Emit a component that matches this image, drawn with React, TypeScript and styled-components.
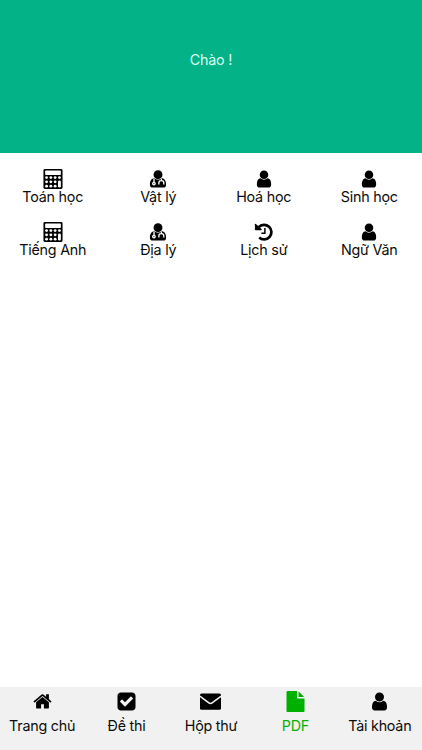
import React from "react";
import styled, { createGlobalStyle } from "styled-components";

const GlobalStyle = createGlobalStyle`
  * { box-sizing: border-box; }
  body { margin: 0; background: #fff; }
`;

const Screen = styled.div`
  display: flex;
  flex-direction: column;
  width: 100%;
  height: 100vh;
  overflow: hidden;
  background: #fff;
  color: #0c0c0c;
  font-family: Inter, "Noto Sans", sans-serif;
  font-size: 14.3px;
  letter-spacing: -0.22px;
  line-height: 17px;
`;

const Header = styled.header`
  height: 153px;
  flex: none;
  padding-top: 51px;
  text-align: center;
  color: #d9fff4;
  background: #03b286;
`;

const SubjectGrid = styled.main`
  flex: 1;
  display: grid;
  grid-template-columns: repeat(4, 1fr);
  grid-auto-rows: 53px;
  padding-top: 15.5px;
`;

const Subject = styled.button`
  display: flex;
  flex-direction: column;
  align-items: center;
  padding: 0;
  border: 0;
  background: none;
  color: inherit;
  font: inherit;
  letter-spacing: inherit;
  white-space: nowrap;
`;

const Label = styled.span`
  display: block;
`;

const Glyph = styled.svg<{ $size: number }>`
  display: block;
  width: ${({ $size }) => $size}px;
  height: ${({ $size }) => $size}px;
  margin-bottom: ${({ $size }) => 19.5 - $size}px;
  fill: currentColor;
  color: #000;
`;

const TabBar = styled.nav`
  flex: none;
  display: grid;
  grid-template-columns: repeat(5, 1fr);
  height: 63.4px;
  background: #f1f1f1;
`;

const Tab = styled(Subject)<{ $active?: boolean }>`
  padding-top: 4.8px;
  color: ${({ $active }) => ($active ? "#08b008" : "#0c0c0c")};

  ${Glyph} {
    margin-bottom: 4.8px;
    color: ${({ $active }) => ($active ? "#00b000" : "#000")};
  }
`;

const paths = {
  user: "M1536 1399q0 109-62.5 187t-150.5 78h-854q-88 0-150.5-78t-62.5-187q0-85 8.5-160.5t31.5-152 58.5-131 94-89 134.5-34.5q131 128 313 128t313-128q76 0 134.5 34.5t94 89 58.5 131 31.5 152 8.5 160.5zm-256-887q0 159-112.5 271.5t-271.5 112.5-271.5-112.5-112.5-271.5 112.5-271.5 271.5-112.5 271.5 112.5 112.5 271.5z",
  check: "M813 1299l614-614q19-19 19-45t-19-45l-102-102q-19-19-45-19t-45 19l-467 467-211-211q-19-19-45-19t-45 19l-102 102q-19 19-19 45t19 45l358 358q19 19 45 19t45-19zm851-883v960q0 119-84.5 203.5t-203.5 84.5h-960q-119 0-203.5-84.5t-84.5-203.5v-960q0-119 84.5-203.5t203.5-84.5h960q119 0 203.5 84.5t84.5 203.5z",
  file: "M1152 512v-472q22 14 36 28l408 408q14 14 28 36h-472zm-128 32q0 40 28 68t68 28h544v1056q0 40-28 68t-68 28h-1344q-40 0-68-28t-28-68v-1600q0-40 28-68t68-28h800v544z",
};

const homePath =
  "M1472 992v480q0 26-19 45t-45 19h-384v-384h-256v384h-384q-26 0-45-19t-19-45v-480q0-1 .5-3t.5-3l575-474 575 474q1 2 1 6zm223-69l-62 74q-8 9-21 11h-3q-13 0-21-7l-692-577-692 577q-12 8-24 7-13-2-21-11l-62-74q-8-10-7-23.5t11-21.5l719-599q32-26 76-26t76 26l244 204v-195q0-14 9-23t23-9h192q14 0 23 9t9 23v408l219 182q10 8 11 21.5t-7 23.5z";

type IconName = keyof typeof paths | "home" | "envelope" | "history" | "calculator" | "doctor";

function Calculator() {
  return (
    <>
      <rect x="40" width="1712" height="1792" rx="128" />
      <g fill="#fff">
        <rect x="192" y="135" width="1408" height="400" rx="64" />
        {[768, 1152, 1536].map((y) =>
          [320, 704, 1088].map((x) => <circle key={`${x}-${y}`} cx={x} cy={y} r="128" />)
        )}
        <circle cx="1472" cy="768" r="128" />
        <rect x="1344" y="1024" width="256" height="640" rx="128" />
      </g>
    </>
  );
}

function Doctor() {
  return (
    <>
      <circle cx="896" cy="512" r="400" />
      <path d="M583 832q131 128 313 128t313-128c270 0 411 230 411 570q0 262-267 262H439q-267 0-267-262c0-340 141-570 411-570z" />
      <g fill="none" stroke="#fff" strokeWidth="120">
        <path d="M540 850v350M1200 850v190M975 1390v-150q0-200 190-200h60q190 0 190 200v150" />
        <circle cx="530" cy="1310" r="110" />
      </g>
    </>
  );
}

function History() {
  return (
    <g transform="scale(89.6)">
      <path d="M5.2 15.5a7.3 7.3 0 1 0-.5-10.3" fill="none" stroke="currentColor" strokeWidth="2.7" />
      <path d="M.9 2.3q.1-1 1-.4l5.6 5q.8 1.2-.4 1.4H1.6q-.7 0-.7-.8z" />
      <path d="M10.9 6v5.3H7.4" fill="none" stroke="currentColor" strokeWidth="1.5" />
    </g>
  );
}

function Envelope() {
  return (
    <>
      <rect y="205" width="1792" height="1400" rx="130" />
      <path d="M-20 445l780 575q136 96 272 0l780-575" fill="none" stroke="#f1f1f1" strokeWidth="135" />
    </>
  );
}

function Drawing({ name }: { name: IconName }) {
  switch (name) {
    case "calculator":
      return <Calculator />;
    case "doctor":
      return <Doctor />;
    case "history":
      return <History />;
    case "envelope":
      return <Envelope />;
    case "home":
      return <path transform="translate(45 30) scale(.95)" d={homePath} />;
    default:
      return <path d={paths[name]} />;
  }
}

function Icon({ name, size = 20 }: { name: IconName; size?: number }) {
  return (
    <Glyph viewBox="0 0 1792 1792" $size={size} aria-hidden="true">
      <Drawing name={name} />
    </Glyph>
  );
}

const subjects: { icon: IconName; label: string }[] = [
  { icon: "calculator", label: "Toán học" },
  { icon: "doctor", label: "Vật lý" },
  { icon: "user", label: "Hoá học" },
  { icon: "user", label: "Sinh học" },
  { icon: "calculator", label: "Tiếng Anh" },
  { icon: "doctor", label: "Địa lý" },
  { icon: "history", label: "Lịch sử" },
  { icon: "user", label: "Ngữ Văn" },
];

const tabs: { icon: IconName; label: string; active?: boolean }[] = [
  { icon: "home", label: "Trang chủ" },
  { icon: "check", label: "Đề thi" },
  { icon: "envelope", label: "Hộp thư" },
  { icon: "file", label: "PDF", active: true },
  { icon: "user", label: "Tài khoản" },
];

export default function App() {
  return (
    <Screen>
      <GlobalStyle />
      <Header>Chào !</Header>
      <SubjectGrid>
        {subjects.map(({ icon, label }) => (
          <Subject key={label}>
            <Icon name={icon} />
            <Label>{label}</Label>
          </Subject>
        ))}
      </SubjectGrid>
      <TabBar>
        {tabs.map(({ icon, label, active }) => (
          <Tab key={label} $active={active}>
            <Icon name={icon} size={21} />
            <Label>{label}</Label>
          </Tab>
        ))}
      </TabBar>
    </Screen>
  );
}
